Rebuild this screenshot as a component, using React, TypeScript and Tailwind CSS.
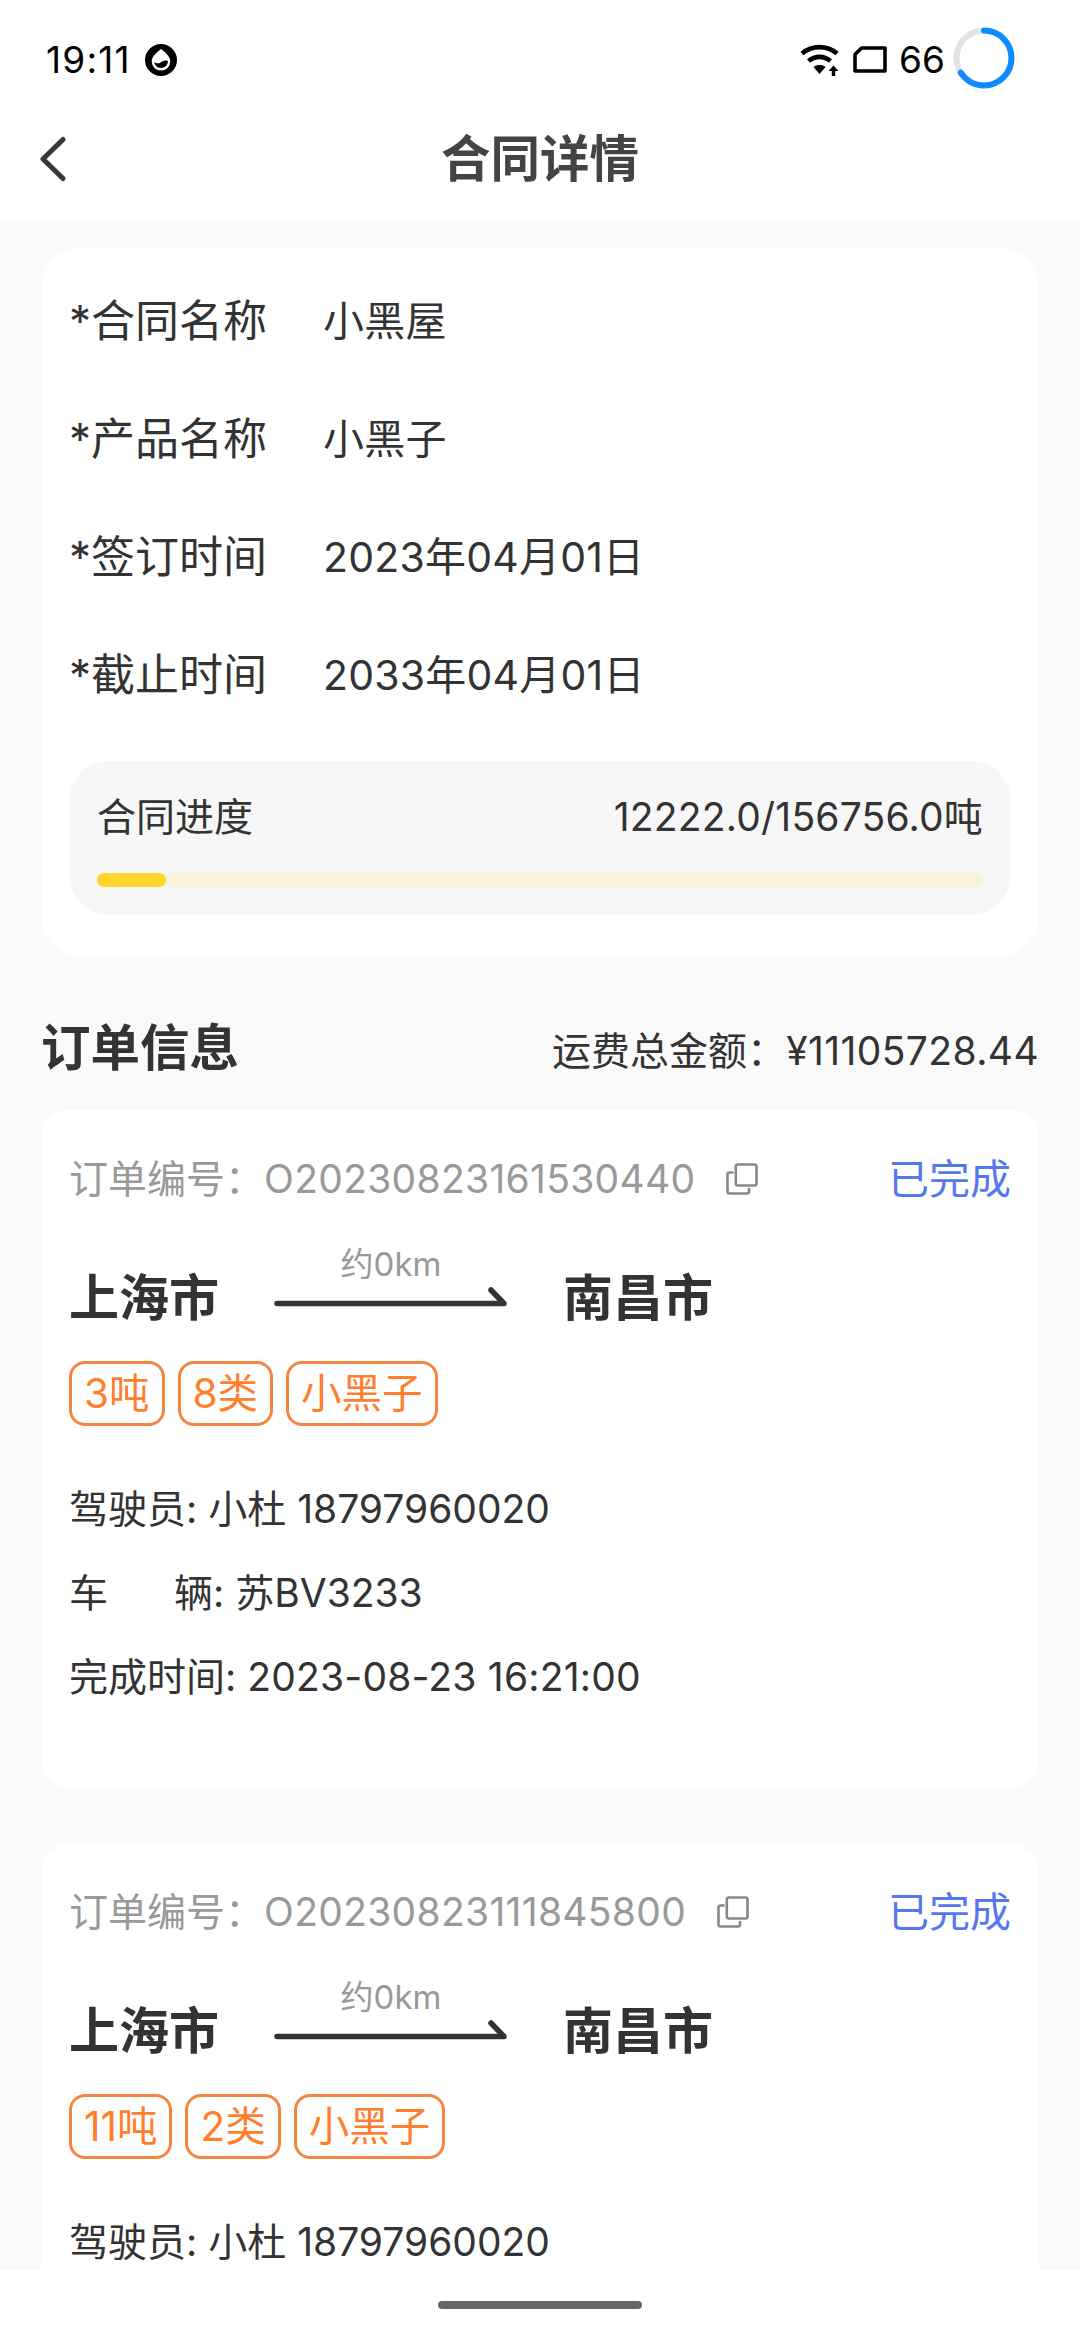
import React from "react";

type TContractField = {
  label: string;
  value: string;
};

type TOrder = {
  id: string;
  status: string;
  from: string;
  to: string;
  distance: string;
  tags: string[];
  driver: string;
  plate?: string; // Optional until a vehicle is loaded
  finishedAt?: string;
};

const fields: TContractField[] = [
  { label: "合同名称", value: "小黑屋" },
  { label: "产品名称", value: "小黑子" },
  { label: "签订时间", value: "2023年04月01日" },
  { label: "截止时间", value: "2033年04月01日" },
];

const progress = { done: 12222, total: 156756 };

const orders: TOrder[] = [
  {
    id: "O20230823161530440",
    status: "已完成",
    from: "上海市",
    to: "南昌市",
    distance: "约0km",
    tags: ["3吨", "8类", "小黑子"],
    driver: "小杜 18797960020",
    plate: "苏BV3233",
    finishedAt: "2023-08-23 16:21:00",
  },
  {
    id: "O20230823111845800",
    status: "已完成",
    from: "上海市",
    to: "南昌市",
    distance: "约0km",
    tags: ["11吨", "2类", "小黑子"],
    driver: "小杜 18797960020",
  },
];

const StatusBar: React.FC = () => (
  <div className="flex h-[116px] items-center pl-[46px] pr-[65px] text-black">
    <div className="mt-[3px] text-[37px] leading-[48px] tracking-[1.2px]">19:11</div>
    <svg className="ml-[14px] mt-[3px]" width="32" height="32" viewBox="0 0 32 32">
      <circle cx="16" cy="16" r="16" fill="#000" />
      <path
        d="M16 5c3 2.500 9.300 6.800 9.300 12.300a9.300 9.300 0 0 1-18.600 0C6.700 11.800 13 7.500 16 5z"
        fill="#fff"
      />
      <path
        d="M9.300 18.300c2 1.400 4.500 1.500 6.700-.1 2-1.400 4.600-2.100 6.900-1.200.2 4-3 7-6.900 7-3.500 0-6.200-2.200-6.700-5.700z"
        fill="#000"
      />
    </svg>
    <div className="ml-auto flex items-center">
      <svg className="mt-[3px]" width="39" height="32" viewBox="0 0 39 32" fill="none">
        <path d="M2 9.500C12 1 27 1 37 9.500" stroke="#000" strokeWidth="4.600" />
        <path d="M8.500 17C15 11.500 24 11.500 30.500 17" stroke="#000" strokeWidth="4.600" />
        <path d="M13.500 23c3.600-2.600 8.400-2.600 12 0l-6 7z" fill="#000" />
        <path d="M33.500 21.500l5 5.500h-3.300v5h-3.400v-5h-3.300z" fill="#000" />
      </svg>
      <svg className="ml-[14px] mt-[3px]" width="34" height="27" viewBox="0 0 34 27" fill="none">
        <path
          d="M8.500 2H32v23H2V8.500z"
          stroke="#000"
          strokeWidth="3.600"
          strokeLinejoin="round"
        />
      </svg>
      <div className="ml-[12px] mt-[3px] text-[37px] leading-[48px]">66</div>
      <svg className="ml-[8px]" width="62" height="62" viewBox="0 0 62 62" fill="none">
        <circle cx="31" cy="31" r="27.500" stroke="#e2e2e2" strokeWidth="6" />
        <circle
          cx="31"
          cy="31"
          r="27.500"
          stroke="#0d8bff"
          strokeWidth="6"
          strokeLinecap="round"
          pathLength="100"
          strokeDasharray="66 34"
          transform="rotate(-90 31 31)"
        />
      </svg>
    </div>
  </div>
);

const NavBar: React.FC = () => (
  <div className="grid h-[104px] grid-cols-[1fr_auto_1fr] items-center px-[38px]">
    <svg className="-mt-[18px]" width="30" height="48" viewBox="0 0 30 48" fill="none">
      <path
        d="M25 4.500L5 24l20 19.500"
        stroke="#383838"
        strokeWidth="5.200"
        strokeLinecap="round"
        strokeLinejoin="round"
      />
    </svg>
    <h1 className="-mt-[18px] text-[49.500px] leading-[60px] font-bold text-[#444]">合同详情</h1>
  </div>
);

const CopyIcon: React.FC = () => (
  <svg width="32" height="32" viewBox="0 0 32 32" fill="none" stroke="#888" strokeWidth="2.600">
    <rect x="9.800" y="1.500" width="20.700" height="21" rx="2" />
    <path d="M7.500 9.500H3.500a2 2 0 0 0-2 2V28.500a2 2 0 0 0 2 2H21a2 2 0 0 0 2-2V25" />
  </svg>
);

const ContractCard: React.FC = () => (
  <section className="h-[708px] rounded-[40px] bg-white px-[28px] pt-[14px]">
    {fields.map((field) => (
      <div key={field.label} className="flex h-[118px] items-center text-[#333]">
        <div className="w-[254px] text-[44px] leading-[60px]">*{field.label}</div>
        <div className="text-[41px] leading-[60px] tracking-[0.2px]">{field.value}</div>
      </div>
    ))}
    <div className="mt-[27px] h-[154px] rounded-[40px] bg-[#f7f7f7] px-[28px] pt-[26px]">
      <div className="flex justify-between text-[39px] leading-[60px] text-[#333]">
        <span>合同进度</span>
        <span className="tracking-[0.2px]">
          {progress.done.toFixed(1)}/{progress.total.toFixed(1)}吨
        </span>
      </div>
      <div className="mt-[26px] h-[14px] rounded-full bg-[#f9f3dc]">
        <div
          className="h-full rounded-full bg-[#ffd52e]"
          style={{ width: `${(progress.done / progress.total) * 100}%` }}
        />
      </div>
    </div>
  </section>
);

const OrderCard: React.FC<{ order: TOrder }> = ({ order }) => (
  <section className="h-[677px] shrink-0 rounded-[28px] bg-white px-[28px] pt-[39px] text-[#333]">
    <div className="flex h-[60px] items-center">
      <span className="text-[39px] leading-[60px] text-[#999]">
        订单编号：<span className="tracking-[0.3px]">{order.id}</span>
      </span>
      <div className="ml-[31px]">
        <CopyIcon />
      </div>
      <span className="ml-auto text-[41px] leading-[60px] text-[#5677f0]">{order.status}</span>
    </div>
    <div className="mt-[29px] flex h-[120px] items-center text-[50px] leading-[60px] font-bold">
      <span>{order.from}</span>
      <div className="mx-[55px] flex h-full w-[234px] flex-col items-center">
        <span className="mt-[4px] text-[33px] leading-[44px] font-normal text-[#999]">
          {order.distance}
        </span>
        <svg className="mt-[1px]" width="234" height="20" viewBox="0 0 234 20" fill="none">
          <path
            d="M3 16.500H230L217 3"
            stroke="#333"
            strokeWidth="5.500"
            strokeLinecap="round"
            strokeLinejoin="round"
          />
        </svg>
      </div>
      <span>{order.to}</span>
    </div>
    <div className="mt-[3px] flex gap-[13px]">
      {order.tags.map((tag) => (
        <span
          key={tag}
          className="h-[65px] rounded-[16px] border-3 border-[#f5853f] px-[12px] text-[40.500px] leading-[59px] text-[#ff7f2f]"
        >
          {tag}
        </span>
      ))}
    </div>
    <div className="mt-[41px] text-[39px] leading-[84px]">
      <div>驾驶员: {order.driver}</div>
      {order.plate && (
        <div className="flex">
          <span className="mr-[66px]">车</span>
          <span>辆: {order.plate}</span>
        </div>
      )}
      {order.finishedAt && (
        <div>
          完成时间: <span className="tracking-[0.2px]">{order.finishedAt}</span>
        </div>
      )}
    </div>
  </section>
);

const App: React.FC = () => {
  return (
    <div className="flex h-[2340px] w-[1080px] flex-col overflow-hidden bg-white font-['Inter','Noto_Sans_CJK_SC',sans-serif]">
      <header className="h-[220px]">
        <StatusBar />
        <NavBar />
      </header>
      <main className="h-[2050px] overflow-hidden bg-[#fafafa] px-[41px] pt-[28px]">
        <ContractCard />
        <div className="flex h-[154px] items-center justify-between pt-[30px] text-[#333]">
          <h2 className="text-[49.500px] leading-[60px] font-bold">订单信息</h2>
          <span className="mt-[6px] text-[39px] leading-[60px]">
            运费总金额：<span className="tracking-[0.4px]">¥11105728.44</span>
          </span>
        </div>
        <div className="flex flex-col gap-[56px]">
          {orders.map((order) => (
            <OrderCard key={order.id} order={order} />
          ))}
        </div>
      </main>
      <footer className="flex h-[70px] items-center justify-center">
        <div className="h-[8px] w-[204px] rounded-full bg-[#666]" />
      </footer>
    </div>
  );
};

export default App;
